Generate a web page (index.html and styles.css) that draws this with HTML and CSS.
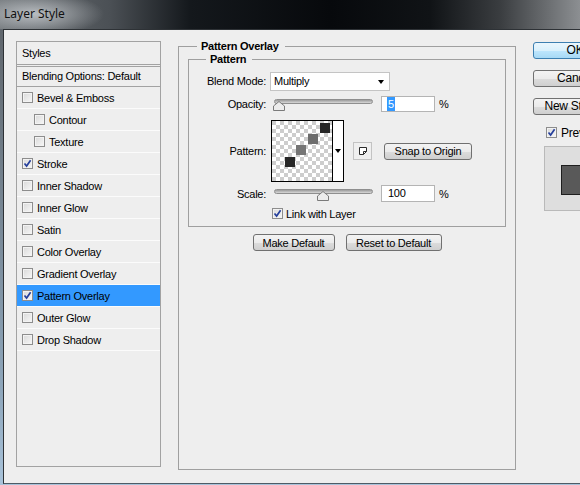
FILE: index.html
```html
<!DOCTYPE html>
<html lang="en">
<head>
  <meta charset="UTF-8">
  <title>Layer Style</title>
  <link rel="stylesheet" href="styles.css">
</head>
<body>
  <div class="titlebar"><span class="title">Layer Style</span></div>

  <div class="client">
    <!-- left list of effects -->
    <div class="styles-panel">
      <div class="panel-head">Styles</div>
      <div class="panel-blend">Blending Options: Default</div>
      <div class="style-row"><span class="cb"></span>Bevel &amp; Emboss</div>
      <div class="style-row sub"><span class="cb"></span>Contour</div>
      <div class="style-row sub"><span class="cb"></span>Texture</div>
      <div class="style-row"><span class="cb"><svg width="9" height="9" viewBox="0 0 9 9"><path d="M1.5 4.5 L3.6 7 L7.6 1.3" /></svg></span>Stroke</div>
      <div class="style-row"><span class="cb"></span>Inner Shadow</div>
      <div class="style-row"><span class="cb"></span>Inner Glow</div>
      <div class="style-row"><span class="cb"></span>Satin</div>
      <div class="style-row"><span class="cb"></span>Color Overlay</div>
      <div class="style-row"><span class="cb"></span>Gradient Overlay</div>
      <div class="style-row active"><span class="cb"><svg width="9" height="9" viewBox="0 0 9 9"><path d="M1.5 4.5 L3.6 7 L7.6 1.3" /></svg></span>Pattern Overlay</div>
      <div class="style-row"><span class="cb"></span>Outer Glow</div>
      <div class="style-row"><span class="cb"></span>Drop Shadow</div>
    </div>

    <!-- settings -->
    <div class="group outer">
      <div class="group-title outer-title">Pattern Overlay</div>
      <div class="group inner">
        <div class="group-title inner-title">Pattern</div>

        <div class="row blend-row">
          <span class="lbl">Blend Mode:</span>
          <div class="select">Multiply<span class="arrow"></span></div>
        </div>

        <div class="row opacity-row">
          <span class="lbl">Opacity:</span>
          <div class="slider">
            <div class="track"></div>
            <svg class="thumb thumb-opacity" width="12" height="10" viewBox="0 0 12 10"><path d="M6 0.5 L11.5 5 L11.5 9.5 L0.5 9.5 L0.5 5 Z" /></svg>
          </div>
          <div class="num"><span class="sel">5</span></div>
          <span class="pct">%</span>
        </div>

        <div class="row pattern-row">
          <span class="lbl">Pattern:</span>
          <div class="swatch">
            <svg class="preview" width="60" height="60" viewBox="0 0 60 60">
              <defs>
                <pattern id="checker" width="8" height="8" patternUnits="userSpaceOnUse">
                  <rect width="8" height="8" fill="#ffffff" />
                  <rect width="4" height="4" fill="#cdcdcd" />
                  <rect x="4" y="4" width="4" height="4" fill="#cdcdcd" />
                </pattern>
              </defs>
              <rect width="60" height="60" fill="url(#checker)" />
              <rect x="48" y="2" width="10" height="10" fill="#262626" />
              <rect x="36" y="13" width="10" height="10" fill="#6c6c6c" />
              <rect x="24" y="24" width="10" height="10" fill="#747474" />
              <rect x="13" y="36" width="10" height="10" fill="#262626" />
            </svg>
            <div class="swatch-drop"><span class="arrow"></span></div>
          </div>
          <div class="icon-btn">
            <svg width="10" height="10" viewBox="0 0 10 10"><path d="M1.5 1.5 H8.5 V5.5 L5.5 8.5 H1.5 Z M5.5 8.5 V5.5 H8.5" /></svg>
          </div>
          <button class="btn snap">Snap to Origin</button>
        </div>

        <div class="row scale-row">
          <span class="lbl">Scale:</span>
          <div class="slider">
            <div class="track"></div>
            <svg class="thumb thumb-scale" width="12" height="10" viewBox="0 0 12 10"><path d="M6 0.5 L11.5 5 L11.5 9.5 L0.5 9.5 L0.5 5 Z" /></svg>
          </div>
          <div class="num">100</div>
          <span class="pct">%</span>
        </div>

        <div class="row link-row">
          <span class="cb"><svg width="9" height="9" viewBox="0 0 9 9"><path d="M1.5 4.5 L3.6 7 L7.6 1.3" /></svg></span>Link with Layer
        </div>
      </div>

      <div class="defaults">
        <button class="btn make">Make Default</button>
        <button class="btn reset">Reset to Default</button>
      </div>
    </div>

    <!-- dialog buttons -->
    <div class="side">
      <button class="btn side-btn ok">OK</button>
      <button class="btn side-btn">Cancel</button>
      <button class="btn side-btn">New Style...</button>
      <div class="preview-check"><span class="cb"><svg width="9" height="9" viewBox="0 0 9 9"><path d="M1.5 4.5 L3.6 7 L7.6 1.3" /></svg></span>Preview</div>
      <div class="preview-box"><div class="preview-swatch"></div></div>
    </div>
  </div>
</body>
</html>
```

FILE: styles.css
```css
body {
  margin: 0;
  width: 580px;
  height: 485px;
  overflow: hidden;
  background: linear-gradient(#5c6166, #8ea6bb 80%, #a9c3da);
  font-family: "Liberation Sans", Arial, sans-serif;
  font-size: 11px;
  letter-spacing: -0.25px;
  color: #000;
}

.titlebar {
  height: 29px;
  background:
    radial-gradient(ellipse 70px 22px at 34px 14px, rgba(200, 204, 208, 0.85), rgba(200, 204, 208, 0) 100%),
    linear-gradient(90deg, #6d7276 0, #4b5055 110px, #14181c 190px, #07090c 330px, #101316 430px, #3a3d40 500px, #8c8f92 580px);
}

.title {
  display: inline-block;
  padding: 5px 0 0 4px;
  font-family: "Noto Sans", "Open Sans", sans-serif;
  font-size: 12px;
  letter-spacing: 0;
  color: #111;
}

.client {
  display: flex;
  align-items: flex-start;
  margin-left: 3px;
  height: 453px;
  border-top: 1px solid #2e3236;
  border-left: 1px solid #2e3236;
  border-bottom: 1px solid #4d5b66;
  background: #eeeeee;
}

/* ---------- left panel ---------- */

.styles-panel {
  flex-shrink: 0;
  box-sizing: border-box;
  width: 145px;
  height: 426px;
  margin: 11px 0 0 12px;
  border: 1px solid #a2a2a2;
  background: #eeeeee;
}

.panel-head {
  height: 22px;
  line-height: 22px;
  padding-left: 5px;
  border-bottom: 3px double #a2a2a2;
}

.panel-blend {
  height: 19px;
  line-height: 19px;
  padding-left: 5px;
  border-bottom: 1px solid #a2a2a2;
}

.style-row {
  display: flex;
  align-items: center;
  height: 21px;
  padding-left: 5px;
  border-bottom: 1px solid #fbfbfb;
}

.style-row.sub {
  padding-left: 17px;
}

.style-row.active {
  background: #3399ff;
}

.cb {
  display: inline-flex;
  align-items: center;
  justify-content: center;
  box-sizing: border-box;
  width: 11px;
  height: 11px;
  margin-right: 4px;
  border: 1px solid #8d8d8d;
  background: linear-gradient(135deg, #d9d9d9, #f7f7f7);
  box-shadow: inset 0 0 0 1px #f3f3f3;
}

.cb svg {
  fill: none;
  stroke: #253f9c;
  stroke-width: 1.7;
}

/* ---------- groups ---------- */

.group {
  box-sizing: border-box;
  border: 1px solid #9f9f9f;
}

.group-title {
  width: fit-content;
  height: 13px;
  line-height: 13px;
  margin-top: -7px;
  padding: 0 6px 0 4px;
  background: #eeeeee;
  font-weight: bold;
}

.outer {
  flex-shrink: 0;
  width: 338px;
  height: 424px;
  margin: 16px 0 0 17px;
}

.outer-title {
  margin-left: 18px;
}

.inner {
  width: 318px;
  margin: 6px 0 0 9px;
  padding-bottom: 7px;
}

.inner-title {
  margin-left: 17px;
}

.row {
  display: flex;
  align-items: center;
}

.lbl {
  width: 77px;
  margin-right: 4px;
  text-align: right;
}

.blend-row {
  height: 18px;
  margin-top: 6px;
}

.select {
  position: relative;
  box-sizing: border-box;
  width: 120px;
  height: 19px;
  line-height: 17px;
  padding-left: 3px;
  border: 1px solid #c4c4c4;
  background: #fff;
}

.arrow {
  display: inline-block;
  width: 0;
  height: 0;
  border-left: 3.5px solid transparent;
  border-right: 3.5px solid transparent;
  border-top: 4px solid #000;
}

.select .arrow {
  position: absolute;
  right: 5px;
  top: 7px;
}

.opacity-row {
  height: 16px;
  margin-top: 6px;
}

.slider {
  position: relative;
  width: 104px;
  height: 16px;
}

.track {
  box-sizing: border-box;
  width: 99px;
  height: 5px;
  margin: 3px 0 0 4px;
  border: 1px solid #8e8e8e;
  border-radius: 3px;
  background: linear-gradient(#9a9a9a, #d8d8d8);
}

.thumb {
  position: absolute;
  top: 5px;
  fill: #ececec;
  stroke: #7a7a7a;
}

.thumb-opacity {
  left: 3px;
}

.thumb-scale {
  left: 47px;
}

.num {
  box-sizing: border-box;
  width: 54px;
  height: 16px;
  line-height: 14px;
  margin-left: 7px;
  padding-left: 5px;
  border: 1px solid #b4b4b4;
  background: #fff;
}

.sel {
  display: inline-block;
  padding: 0 1px;
  background: #3399ff;
  color: #fff;
}

.pct {
  margin-left: 4px;
}

.pattern-row {
  margin-top: 8px;
}

.swatch {
  display: flex;
  margin-left: 1px;
  border: 1px solid #000;
}

.preview {
  display: block;
}

.swatch-drop {
  display: flex;
  align-items: center;
  justify-content: center;
  width: 10px;
  border-left: 1px solid #000;
  background: #fff;
}

.icon-btn {
  display: flex;
  align-items: center;
  justify-content: center;
  box-sizing: border-box;
  width: 19px;
  height: 18px;
  margin-left: 9px;
  border: 1px solid #c3c3c3;
  background: #efefef;
}

.icon-btn svg {
  fill: #fff;
  stroke: #2b2b2b;
}

.btn {
  box-sizing: border-box;
  height: 17px;
  padding: 0;
  border: 1px solid #707070;
  border-radius: 3px;
  background: linear-gradient(#f3f3f3 0, #ebebeb 50%, #dcdcdc 51%, #cfcfcf 100%);
  font-family: "Liberation Sans", Arial, sans-serif;
  font-size: 11px;
  letter-spacing: -0.25px;
  color: #000;
}

.snap {
  width: 88px;
  margin-left: 12px;
}

.scale-row {
  height: 17px;
  margin-top: 3px;
}

.scale-row .num {
  height: 17px;
  line-height: 15px;
  padding-left: 6px;
}

.link-row {
  height: 11px;
  margin: 6px 0 0 83px;
}

.link-row .cb {
  margin-right: 3px;
}

.defaults {
  display: flex;
  justify-content: center;
  gap: 11px;
  margin-top: 7px;
}

.make {
  width: 82px;
}

.reset {
  width: 96px;
}

/* ---------- right column ---------- */

.side {
  flex-shrink: 0;
  display: flex;
  flex-direction: column;
  margin: 12px 0 0 17px;
  font-size: 12px;
}

.side-btn {
  width: 84px;
  height: 17px;
  margin-bottom: 11px;
  font-size: 12px;
  line-height: 13px;
}

.ok {
  border-color: #3c7fb1;
  background: linear-gradient(#eaf6fd 0, #d9f0fc 50%, #bee6fd 51%, #a7d9f5 100%);
}

.preview-check {
  display: flex;
  align-items: center;
  height: 11px;
  margin: 1px 0 0 13px;
}

.preview-check .cb {
  margin-right: 4px;
}

.preview-box {
  box-sizing: border-box;
  width: 80px;
  height: 65px;
  margin: 8px 0 0 11px;
  padding: 18px 0 0 16px;
  border: 1px solid #b9b9b9;
  background: #dedede;
}

.preview-swatch {
  box-sizing: border-box;
  width: 40px;
  height: 30px;
  border: 1px solid #1e1e1e;
  background: #595959;
}
```
